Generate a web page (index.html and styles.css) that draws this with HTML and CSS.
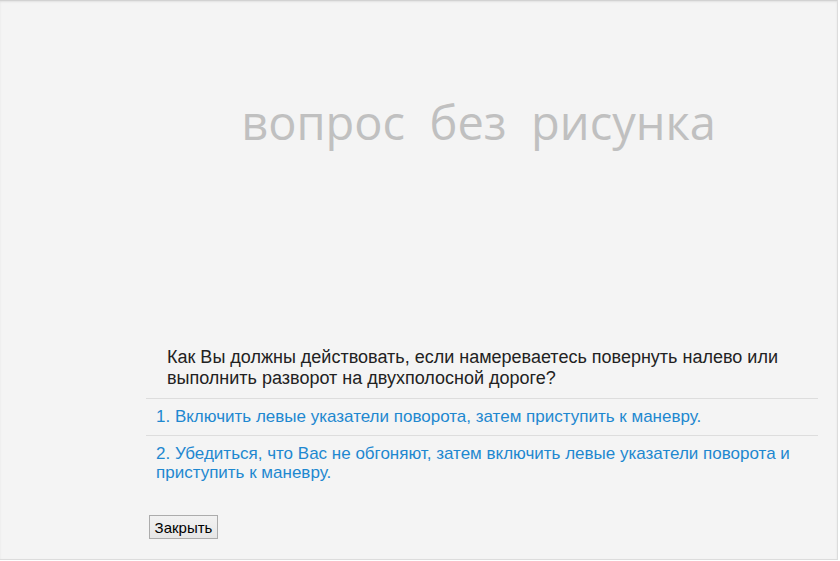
FILE: index.html
```html
<!DOCTYPE html>
<html lang="ru">
<head>
<meta charset="utf-8">
<title>Вопрос</title>
<link rel="stylesheet" href="styles.css">
</head>
<body>
<div class="dialog">
  <div class="content">
    <div class="picture"><span class="no-pic">вопрос&nbsp; без&nbsp; рисунка</span></div>
    <div class="question">Как Вы должны действовать, если намереваетесь повернуть налево или выполнить разворот на двухполосной дороге?</div>
    <ul class="answers">
      <li class="answer">1. Включить левые указатели поворота, затем приступить к маневру.</li>
      <li class="answer">2. Убедиться, что Вас не обгоняют, затем включить левые указатели поворота и приступить к маневру.</li>
    </ul>
    <button class="close" type="button">Закрыть</button>
  </div>
</div>
</body>
</html>
```
FILE: styles.css
```css
html, body {
  margin: 0;
  padding: 0;
  background: #ffffff;
}
.dialog {
  box-sizing: border-box;
  width: 838px;
  height: 560px;
  background: #f4f4f4;
  border-top: 1px solid #d2d2d2;
  border-right: 1px solid #dcdcdc;
  border-bottom: 1px solid #dcdcdc;
  box-shadow: inset 0 1px 2px rgba(0, 0, 0, 0.08);
  font-family: "Liberation Sans", Arial, sans-serif;
}
.content {
  margin-left: 146px;
  width: 672px;
}
.picture {
  height: 336px;
  display: flex;
  justify-content: center;
  box-sizing: border-box;
  padding-top: 96px;
  padding-right: 7px;
}
.no-pic {
  font-family: "Open Sans", sans-serif;
  font-size: 47px;
  line-height: 50px;
  height: 50px;
  color: #c0c0c0;
}
.question {
  padding: 10px 21px 9px;
  font-size: 18px;
  line-height: 21px;
  color: #222222;
  border-bottom: 1px solid #dddddd;
}
.answers {
  list-style: none;
  margin: 0;
  padding: 0;
}
.answer {
  padding: 8px 10px 9px;
  font-size: 17px;
  line-height: 19px;
  color: #1e88d0;
  border-bottom: 1px solid #dddddd;
}
.answer:last-child {
  border-bottom: none;
}
.close {
  margin: 24px 0 0 3px;
  width: 69px;
  height: 24px;
  padding: 0;
  font-family: "Liberation Sans", Arial, sans-serif;
  font-size: 15px;
  color: #000;
  background: linear-gradient(#f2f2f2, #e6e6e6);
  border: 1px solid #acacac;
  border-radius: 0;
}
```
